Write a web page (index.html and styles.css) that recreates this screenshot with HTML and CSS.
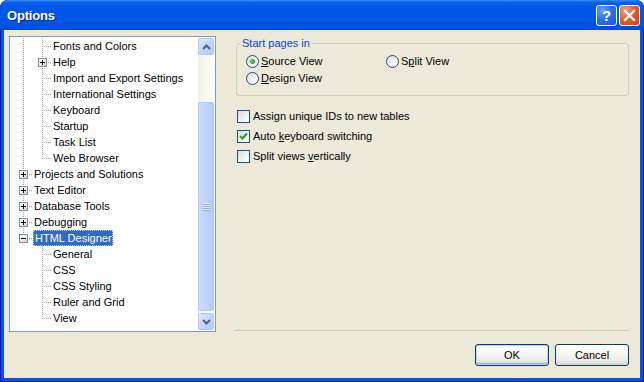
FILE: index.html
```html
<!DOCTYPE html>
<html>
<head>
<meta charset="utf-8">
<link rel="stylesheet" href="styles.css">
</head>
<body>
<div class="window">
  <div class="titlebar">
    <span class="title">Options</span>
    <div class="caption-btns">
      <span class="cbtn help">?</span>
      <span class="cbtn close"><svg width="13" height="13" viewBox="0 0 13 13"><path d="M2 2 L11 11 M11 2 L2 11" stroke="#fff" stroke-width="2.2" stroke-linecap="square"/></svg></span>
    </div>
  </div>
  <div class="client">
    <div class="tree">
      <div class="tree-list">
        <div class="row"><span class="g v"></span><span class="g t"></span><span class="lbl">Fonts and Colors</span></div>
        <div class="row"><span class="g v"></span><span class="g t"><span class="exp plus"></span></span><span class="lbl">Help</span></div>
        <div class="row"><span class="g v"></span><span class="g t"></span><span class="lbl">Import and Export Settings</span></div>
        <div class="row"><span class="g v"></span><span class="g t"></span><span class="lbl">International Settings</span></div>
        <div class="row"><span class="g v"></span><span class="g t"></span><span class="lbl">Keyboard</span></div>
        <div class="row"><span class="g v"></span><span class="g t"></span><span class="lbl">Startup</span></div>
        <div class="row"><span class="g v"></span><span class="g t"></span><span class="lbl">Task List</span></div>
        <div class="row"><span class="g v"></span><span class="g l"></span><span class="lbl">Web Browser</span></div>
        <div class="row"><span class="g t"><span class="exp plus"></span></span><span class="lbl">Projects and Solutions</span></div>
        <div class="row"><span class="g t"><span class="exp plus"></span></span><span class="lbl">Text Editor</span></div>
        <div class="row"><span class="g t"><span class="exp plus"></span></span><span class="lbl">Database Tools</span></div>
        <div class="row"><span class="g t"><span class="exp plus"></span></span><span class="lbl">Debugging</span></div>
        <div class="row"><span class="g l"><span class="exp minus"></span></span><span class="lbl sel">HTML Designer</span></div>
        <div class="row"><span class="g"></span><span class="g t"></span><span class="lbl">General</span></div>
        <div class="row"><span class="g"></span><span class="g t"></span><span class="lbl">CSS</span></div>
        <div class="row"><span class="g"></span><span class="g t"></span><span class="lbl">CSS Styling</span></div>
        <div class="row"><span class="g"></span><span class="g t"></span><span class="lbl">Ruler and Grid</span></div>
        <div class="row"><span class="g"></span><span class="g l"></span><span class="lbl">View</span></div>
      </div>
      <div class="vscroll">
        <div class="sbtn"><svg width="9" height="6" viewBox="0 0 9 6"><path d="M1 5 L4.5 1.5 L8 5" fill="none" stroke="#4D6185" stroke-width="2"/></svg></div>
        <div class="track-top"></div>
        <div class="thumb"><span class="grip"></span></div>
        <div class="track-bottom"></div>
        <div class="sbtn"><svg width="9" height="6" viewBox="0 0 9 6"><path d="M1 1 L4.5 4.5 L8 1" fill="none" stroke="#4D6185" stroke-width="2"/></svg></div>
      </div>
    </div>
    <div class="pane">
      <fieldset class="group">
        <legend>Start pages in</legend>
        <div class="radios">
          <div class="opt"><span class="radio on"></span><span><u>S</u>ource View</span></div>
          <div class="opt"><span class="radio"></span><span>S<u>p</u>lit View</span></div>
          <div class="opt"><span class="radio"></span><span><u>D</u>esign View</span></div>
        </div>
      </fieldset>
      <div class="checks">
        <div class="chk"><span class="box"></span><span>Assi<u>g</u>n unique IDs to new tables</span></div>
        <div class="chk"><span class="box on"><svg width="9" height="9" viewBox="0 0 9 9"><path d="M1 4 L3.5 6.5 L8 1.5" fill="none" stroke="#21A121" stroke-width="2"/></svg></span><span>Auto <u>k</u>eyboard switching</span></div>
        <div class="chk"><span class="box"></span><span>Split views <u>v</u>ertically</span></div>
      </div>
      <div class="spacer"></div>
      <div class="sep"></div>
      <div class="buttons">
        <span class="btn default">OK</span>
        <span class="btn">Cancel</span>
      </div>
    </div>
  </div>
</div>
</body>
</html>
```

FILE: styles.css
```css
html, body {
  margin: 0;
  padding: 0;
  background: #ffffff;
}
body {
  font-family: "Liberation Sans", Arial, sans-serif;
  font-size: 11px;
  color: #000;
}
.window {
  width: 644px;
  height: 382px;
  box-sizing: border-box;
  background: #0752E0;
  border-radius: 8px 8px 0 0;
  box-shadow: inset 0 0 0 1px #0019A8;
  display: flex;
  flex-direction: column;
  overflow: hidden;
}
.titlebar {
  height: 30px;
  flex: none;
  display: flex;
  align-items: center;
  justify-content: space-between;
  padding: 0 4px 0 7px;
  background: linear-gradient(#3C8EF7 0, #0D63EE 2px, #0058E8 6px, #0057E6 16px, #0054E2 24px, #004DDA 28px, #0046D0 30px);
  border-radius: 8px 8px 0 0;
}
.title {
  color: #fff;
  font-weight: bold;
  font-size: 13px;
  letter-spacing: -0.2px;
  text-shadow: 1px 1px 0 #0A1E86;
  margin-top: 1px;
}
.caption-btns {
  display: flex;
  gap: 2px;
  margin-top: 1px;
}
.cbtn {
  width: 21px;
  height: 21px;
  box-sizing: border-box;
  border: 1px solid #fff;
  border-radius: 3px;
  display: flex;
  align-items: center;
  justify-content: center;
}
.help {
  background: radial-gradient(circle at 30% 25%, #6CA3FF 0, #2D6FF0 45%, #1C55D8 100%);
  color: #fff;
  font-weight: bold;
  font-size: 15px;
  font-family: "Liberation Sans", Arial, sans-serif;
}
.close {
  background: radial-gradient(circle at 30% 25%, #F0A180 0, #E05A2C 50%, #C9411A 100%);
}
.client {
  flex: 1;
  margin: 0 4px 4px 4px;
  background: #ECE9D8;
  display: flex;
}
.tree {
  width: 207px;
  height: 296px;
  box-sizing: border-box;
  margin: 6px 0 0 5px;
  border: 1px solid #7F9DB9;
  background: #fff;
  display: flex;
  flex: none;
}
.tree-list {
  flex: 1;
  padding: 1px 0 0 4px;
  overflow: hidden;
}
.row {
  height: 16px;
  display: flex;
  align-items: stretch;
  line-height: 16px;
  white-space: nowrap;
}
.g {
  width: 19px;
  flex: none;
  display: flex;
  align-items: flex-start;
}
.g.v {
  background: repeating-linear-gradient(to bottom, #A0A0A0 0 1px, transparent 1px 2px) 9px 0 / 1px 16px no-repeat;
}
.g.t {
  background:
    repeating-linear-gradient(to bottom, #A0A0A0 0 1px, transparent 1px 2px) 9px 0 / 1px 16px no-repeat,
    repeating-linear-gradient(to right, #A0A0A0 0 1px, transparent 1px 2px) 11px 8px / 8px 1px no-repeat;
}
.g.l {
  background:
    repeating-linear-gradient(to bottom, #A0A0A0 0 1px, transparent 1px 2px) 9px 0 / 1px 9px no-repeat,
    repeating-linear-gradient(to right, #A0A0A0 0 1px, transparent 1px 2px) 11px 8px / 8px 1px no-repeat;
}
.exp {
  width: 9px;
  height: 9px;
  box-sizing: border-box;
  margin: 4px 0 0 5px;
  border: 1px solid #7A8EA0;
  background:
    linear-gradient(#000, #000) 1px 3px / 5px 1px no-repeat,
    linear-gradient(135deg, #fff 0, #F0EFEA 50%, #D4D0C4 100%);
}
.exp.plus {
  background:
    linear-gradient(#000, #000) 1px 3px / 5px 1px no-repeat,
    linear-gradient(#000, #000) 3px 1px / 1px 5px no-repeat,
    linear-gradient(135deg, #fff 0, #F0EFEA 50%, #D4D0C4 100%);
}
.lbl {
  padding: 0 1px;
}
.lbl.sel {
  background: #316AC5;
  color: #fff;
  outline: 1px dotted #B9C8E8;
  outline-offset: -1px;
  padding: 0 1px 0 2px;
}
.vscroll {
  width: 17px;
  flex: none;
  display: flex;
  flex-direction: column;
  background: #FAF9F4;
  padding: 1px 0;
  box-sizing: border-box;
}
.sbtn {
  height: 17px;
  margin: 0 1px 0 0;
  box-sizing: border-box;
  border: 1px solid #B5C8F4;
  border-radius: 2px;
  background: linear-gradient(135deg, #E1EAFE 0, #C4D5FB 50%, #B3C8F5 100%);
  display: flex;
  align-items: center;
  justify-content: center;
}
.track-top {
  height: 47px;
  background: linear-gradient(to right, #F3F1EC, #FEFEFB);
}
.track-bottom {
  flex: 1;
  background: linear-gradient(to right, #F3F1EC, #FEFEFB);
}
.thumb {
  height: 209px;
  margin-right: 1px;
  box-sizing: border-box;
  border: 1px solid #B4C7F4;
  border-radius: 2px;
  background: linear-gradient(to right, #CAD9FD 0, #C1D3FB 50%, #B6CBF8 100%);
  display: flex;
  align-items: center;
  justify-content: center;
}
.grip {
  width: 7px;
  height: 8px;
  background: repeating-linear-gradient(to bottom, #EEF4FE 0 1px, #8CAEF0 1px 2px);
}
.pane {
  flex: 1;
  display: flex;
  flex-direction: column;
  padding: 7px 11px 0 18px;
}
.group {
  margin: 0 0 0 2px;
  padding: 3px 8px 9px 3px;
  border: 1px solid #D0D0BF;
  border-radius: 3px;
  min-width: 0;
}
.group legend {
  color: #0046D5;
  padding: 0 2px;
  line-height: 13px;
}
.radios {
  margin-left: 6px;
  display: grid;
  grid-template-columns: 140px auto;
  row-gap: 1px;
}
.opt {
  height: 16px;
  display: flex;
  align-items: center;
  gap: 2px;
}
.radio {
  width: 13px;
  height: 13px;
  box-sizing: border-box;
  border: 1px solid #1C5180;
  border-radius: 50%;
  background: linear-gradient(135deg, #DCDCD7 0, #F4F4F0 60%, #fff 100%);
  display: flex;
  align-items: center;
  justify-content: center;
  flex: none;
}
.radio.on::after {
  content: "";
  width: 5px;
  height: 5px;
  border-radius: 50%;
  background: radial-gradient(circle at 40% 40%, #61D761 0, #21A121 70%);
}
.checks {
  margin: 10px 0 0 3px;
  display: flex;
  flex-direction: column;
}
.chk {
  height: 20px;
  display: flex;
  align-items: center;
  gap: 3px;
}
.box {
  width: 13px;
  height: 13px;
  box-sizing: border-box;
  border: 1px solid #1C5180;
  background: linear-gradient(135deg, #DCDCD7 0, #F4F4F0 60%, #fff 100%);
  display: flex;
  align-items: center;
  justify-content: center;
  flex: none;
}
.spacer {
  flex: 1;
}
.sep {
  height: 1px;
  background: #D0CDBE;
}
.buttons {
  display: flex;
  justify-content: flex-end;
  gap: 6px;
  margin: 13px 0 12px 0;
}
.btn {
  width: 74px;
  height: 22px;
  box-sizing: border-box;
  border: 1px solid #003C74;
  border-radius: 3px;
  background: linear-gradient(#FFFFFF 0, #F7F7F4 40%, #ECEBE6 80%, #D6D0C5 100%);
  display: flex;
  align-items: center;
  justify-content: center;
}
.btn.default {
  box-shadow: inset 0 0 0 1px #BCD4F6, inset 0 -1px 0 1px #89ADE4;
}
```
